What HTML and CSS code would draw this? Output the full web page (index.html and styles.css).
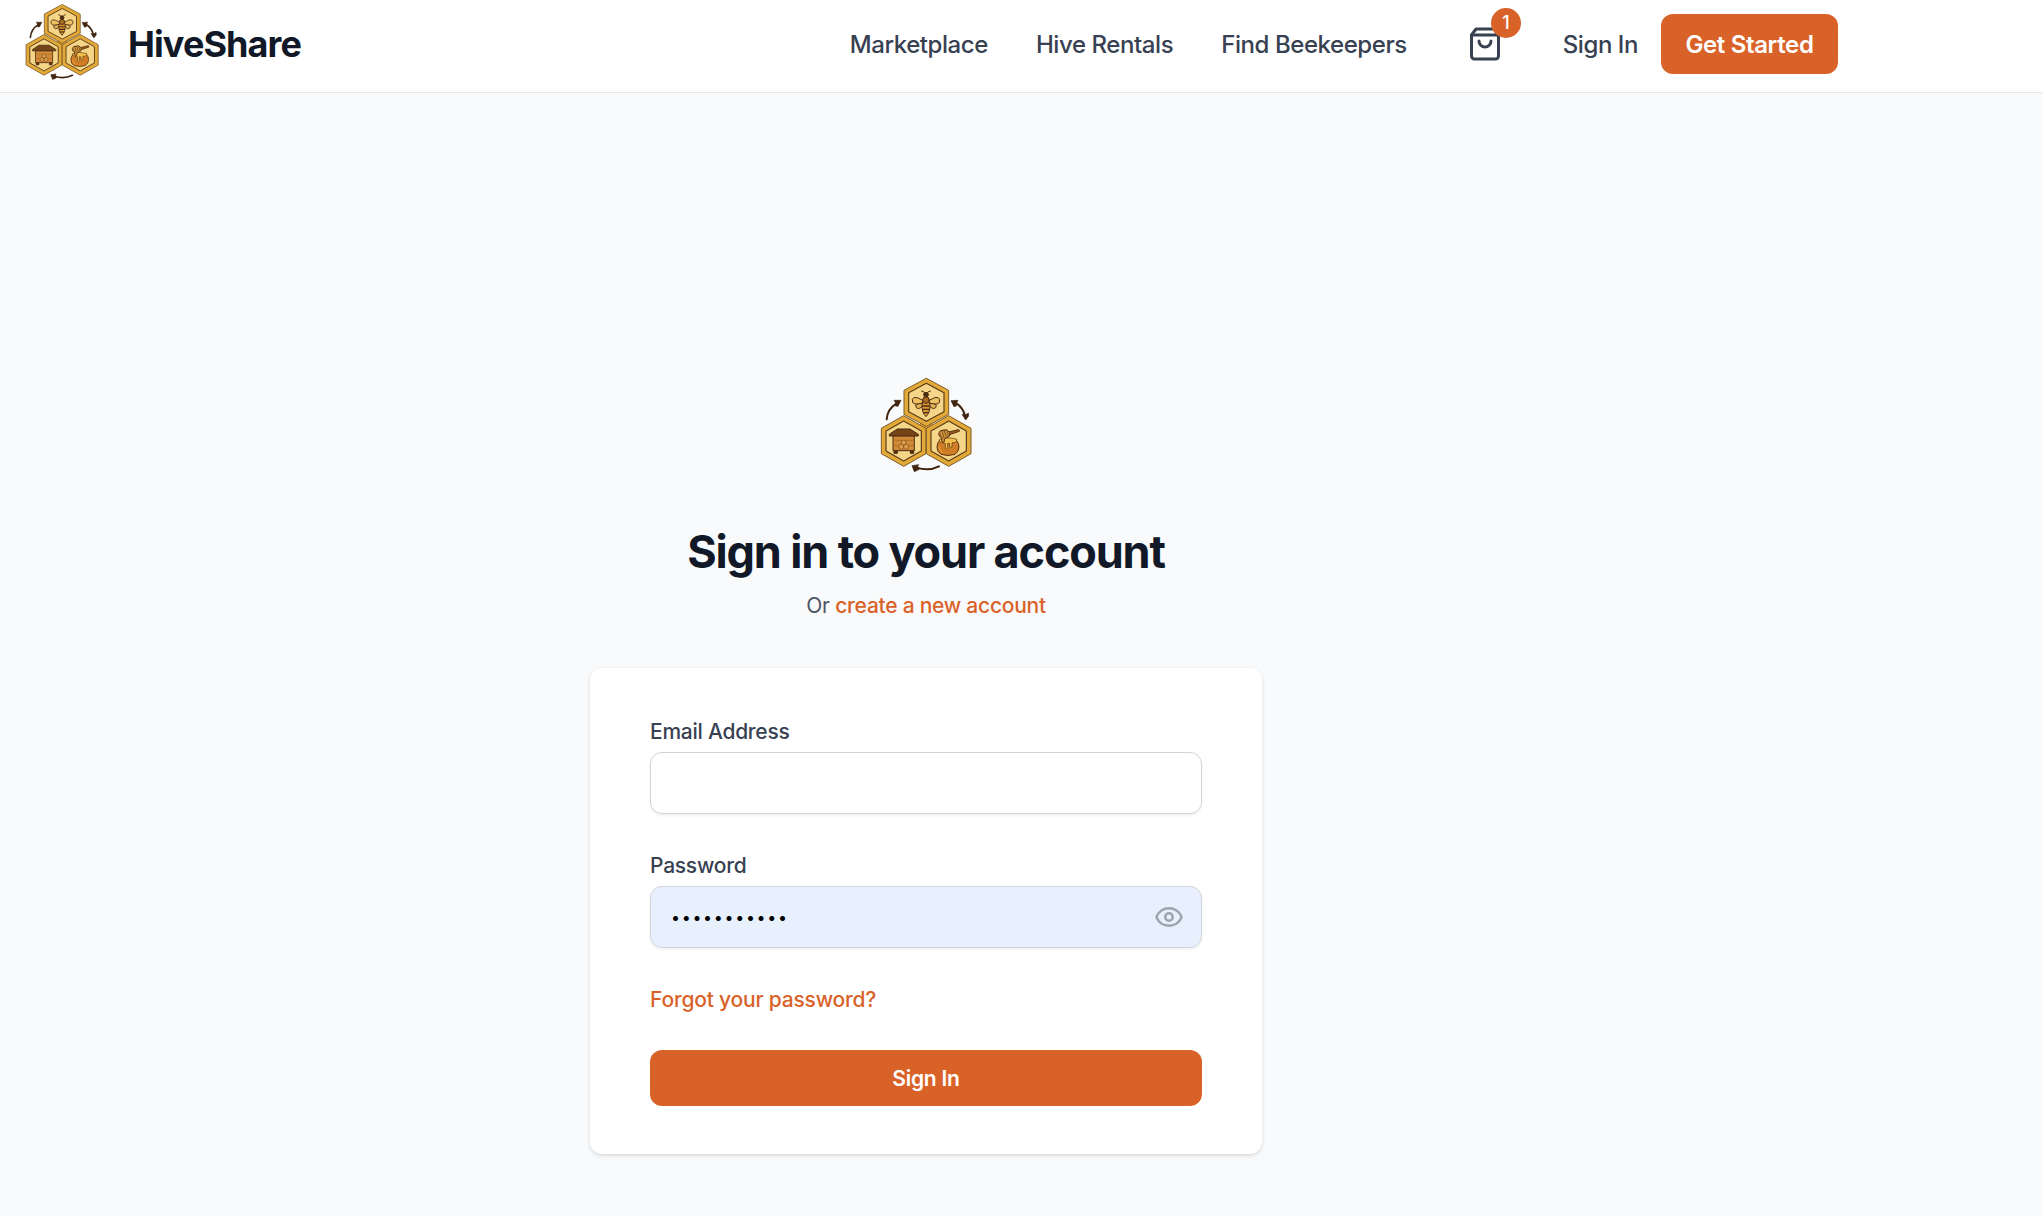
FILE: index.html
```html
<!DOCTYPE html>
<html lang="en">
<head>
    <meta charset="UTF-8">
    <meta name="viewport" content="width=device-width, initial-scale=1.0">
    <title>HiveShare - Sign In</title>
    <link rel="stylesheet" href="styles.css">
</head>
<body>
    <!-- Logo, shared by the header and the form -->
    <svg class="sprite" aria-hidden="true">
        <symbol id="logo" viewBox="60 22 276 288">
            <defs>
                <g id="cell">
                    <path d="M0-76 67-38V38L0 76-67 38V-38Z" fill="#e3a938" stroke="#7d5a28" stroke-width="3" stroke-linejoin="round"/>
                    <path d="M0-60 53-30V30L0 60-53 30V-30Z" fill="#f5d688" stroke="#5a3c17" stroke-width="3.5" stroke-linejoin="round"/>
                </g>
            </defs>
            <path d="M180 150h38v45h-38Z" fill="#e3a938"/>
            <use href="#cell" transform="translate(199 98) scale(1 .95)"/>
            <use href="#cell" x="131" y="214"/>
            <use href="#cell" x="266" y="214"/>

            <!-- bee -->
            <g stroke="#4a2c12" stroke-width="3" stroke-linecap="round" fill="none">
                <path d="M194 70q-2-6-9-6M202 70q2-6 9-6"/>
                <path d="M190 93 172 84q-13-3-15 5-2 12 8 14 12 2 25-4M206 93l18-9q13-3 15 5 2 12-8 14-12 2-25-4" fill="#edc064"/>
                <path d="M188 101q-16 0-21 6 0 9 8 10 9-1 14-11M208 101q16 0 21 6 0 9-8 10-9-1-14-11" fill="#e5b55a"/>
                <path d="M188 96q-5 14 0 28 4 11 10 17 6-6 10-17 5-14 0-28Z" fill="#d89733"/>
                <path d="M188 109h20M188 119h20M191 129h14" stroke-width="4"/>
                <ellipse cx="198" cy="91" rx="10" ry="10" fill="#a76a22"/>
                <circle cx="198" cy="75" r="7" fill="#4a2c12"/>
            </g>

            <!-- hive box -->
            <g stroke="#4a2a12" stroke-width="3" stroke-linejoin="round">
                <path d="M102 240h10v11h-10ZM151 240h10v11h-10Z" fill="#5a3214"/>
                <path d="M99 198h64v45H99Z" fill="#d18a38"/>
                <path d="M99 212h64M99 228h64" stroke="#a4642a" stroke-width="2"/>
                <path d="M88 194 112 178h38l25 16v5H88Z" fill="#754518"/>
                <path d="m131 211 7 4v8l-7 4-7-4v-8ZM124 223l7 4v8l-7 4-7-4v-8ZM138 223l7 4v8l-7 4-7-4v-8Z" fill="#dfa24b" stroke="#7a4a1c" stroke-width="2"/>
            </g>

            <!-- honey pot -->
            <g stroke="#55310f" stroke-width="3" stroke-linejoin="round" stroke-linecap="round">
                <path d="M240 211q-9 8-9 21 0 15 12 22 21 7 42 0 12-9 12-22 0-12-8-20Z" fill="#cf7d27"/>
                <path d="M239 209q25-9 51 0v7q-8 5-14 3v13q-4 5-7 0v-10l-6-1v15q-4 5-7 0v-15q-12 1-17-5Z" fill="#f2bf4c" stroke-width="2"/>
                <path d="m266 187 29-7q5 1 3 5l-27 9Z" fill="#9b5b1d"/>
                <path d="m242 183 18-3 10 9-2 11-15 8v8q-3 5-7 1l-1-12q-8-3-9-12Z" fill="#d3963c"/>
                <path d="m245 182 7 22M252 181l7 21M239 191l7 14M260 182l5 16" fill="none" stroke-width="2"/>
                <path d="M237 232q2 12 10 16" fill="none" stroke="#eda63e"/>
            </g>

            <!-- arrows between the cells -->
            <g fill="none" stroke="#40240f" stroke-width="6" stroke-linecap="round">
                <path d="M80 149q2-31 30-48M286 99q24 15 29 40M237 290q-32 16-68 3"/>
            </g>
            <path d="m123 92-21 0 5 8-1 9 8 1ZM273 93l21-1-4 7-1 10-7 2ZM317 151l-11-17 10 2 9-6 1 9ZM156 288l20-3-4 8 6 6-15 7Z" fill="#40240f" stroke="#40240f" stroke-width="2" stroke-linejoin="round"/>
        </symbol>
    </svg>

    <header>
        <div class="header-inner">
            <a class="brand" href="#">
                <svg class="brand-logo"><use href="#logo"/></svg>
                <span class="brand-name">HiveShare</span>
            </a>
            <nav>
                <a href="#">Marketplace</a>
                <a href="#">Hive Rentals</a>
                <a href="#">Find Beekeepers</a>
            </nav>
            <a class="cart" href="#" aria-label="Cart">
                <svg viewBox="0 0 24 24">
                    <path d="M6 2 3 6v14a2 2 0 0 0 2 2h14a2 2 0 0 0 2-2V6l-3-4Z"/>
                    <path d="M3 6h18"/>
                    <path d="M16 10a4 4 0 0 1-8 0"/>
                </svg>
                <span class="cart-count">1</span>
            </a>
            <a class="sign-in" href="#">Sign In</a>
            <a class="get-started" href="#">Get Started</a>
        </div>
    </header>

    <main>
        <svg class="form-logo"><use href="#logo"/></svg>
        <h1>Sign in to your account</h1>
        <p class="subtitle">Or <a href="#">create a new account</a></p>

        <form class="card">
            <label for="email">Email Address</label>
            <input type="email" id="email">

            <label for="password">Password</label>
            <div class="password-field">
                <input type="password" id="password" value="honeycombs1">
                <button type="button" class="toggle" aria-label="Show password">
                    <svg viewBox="0 0 24 24">
                        <path d="M2.062 12.348a1 1 0 0 1 0-.696 10.75 10.75 0 0 1 19.876 0 1 1 0 0 1 0 .696 10.75 10.75 0 0 1-19.876 0"/>
                        <circle cx="12" cy="12" r="3"/>
                    </svg>
                </button>
            </div>

            <a class="forgot" href="#">Forgot your password?</a>
            <button type="submit" class="submit">Sign In</button>
        </form>
    </main>
</body>
</html>
```
FILE: styles.css
```css
* {
    box-sizing: border-box;
}

body {
    font-family: Inter, "Liberation Sans", sans-serif;
    margin: 0;
    min-height: 1216px;
    background-color: #f9fafc;
    color: #111827;
}

a {
    color: inherit;
    text-decoration: none;
}

.sprite {
    position: absolute;
    width: 0;
    height: 0;
}

header {
    height: 93px;
    background-color: #fff;
    border-bottom: 1px solid #e2e5e9;
}

.header-inner {
    display: flex;
    align-items: center;
    width: 1838px;
    height: 88px;
    padding-left: 25px;
    font-size: 24px;
    font-weight: 550;
    line-height: 36px;
    letter-spacing: -0.43px;
    color: #374151;
    white-space: nowrap;
}

.brand {
    display: flex;
    align-items: center;
    gap: 29px;
    margin-right: auto;
}

.brand-logo {
    width: 74px;
    height: 78px;
    margin-top: -4px;
}

.brand-name {
    font-size: 36px;
    font-weight: 700;
    letter-spacing: -0.9px;
    color: #111827;
}

nav {
    display: flex;
    gap: 48px;
    margin-right: 60px;
    padding-top: 1px;
}

.cart {
    position: relative;
    width: 36px;
    height: 36px;
    margin-right: 60px;
}

.cart svg,
.toggle svg {
    display: block;
    width: 100%;
    height: 100%;
    fill: none;
    stroke: currentColor;
    stroke-width: 2;
    stroke-linecap: round;
    stroke-linejoin: round;
}

.cart-count {
    position: absolute;
    top: -18px;
    right: -18px;
    width: 30px;
    height: 30px;
    border-radius: 50%;
    background-color: #d96229;
    color: #fff;
    font-size: 18px;
    line-height: 30px;
    text-align: center;
}

.sign-in {
    margin-right: 23px;
    padding-top: 1px;
}

.get-started {
    width: 177px;
    height: 60px;
    border-radius: 12px;
    background-color: #d96229;
    color: #fff;
    font-weight: 600;
    line-height: 61px;
    letter-spacing: -0.35px;
    text-align: center;
}

main {
    display: flex;
    flex-direction: column;
    align-items: center;
    width: 1852px;
    padding-top: 284px;
}

.form-logo {
    width: 92px;
    height: 96px;
}

h1 {
    margin: 52px 0 0;
    font-size: 45px;
    font-weight: 700;
    line-height: 54px;
    letter-spacing: -1.15px;
}

.subtitle {
    margin: 12px 0 0;
    font-size: 21px;
    line-height: 30px;
    letter-spacing: -0.25px;
    color: #4b5563;
}

.subtitle a,
.forgot {
    color: #d96229;
    font-weight: 550;
}

.card {
    display: flex;
    flex-direction: column;
    width: 672px;
    height: 486px;
    margin-top: 47px;
    padding: 49px 60px 48px;
    border-radius: 12px;
    background-color: #fff;
    box-shadow: 0 1.5px 4.5px rgba(0, 0, 0, 0.1), 0 1.5px 3px -1.5px rgba(0, 0, 0, 0.1);
}

label {
    margin-bottom: 5px;
    font-size: 21px;
    font-weight: 550;
    line-height: 30px;
    letter-spacing: -0.25px;
    color: #374151;
}

input {
    width: 100%;
    height: 62px;
    padding: 0 20px;
    border: 1px solid #d1d5db;
    border-radius: 12px;
    box-shadow: 0 1.5px 3px rgba(0, 0, 0, 0.05);
    font-family: inherit;
    font-size: 21px;
    outline: none;
}

#email {
    margin-bottom: 37px;
}

.password-field {
    position: relative;
}

#password {
    display: block;
    background-color: #e8effd;
    color: #000;
    font-size: 16px;
    letter-spacing: 1.7px;
}

.toggle {
    position: absolute;
    top: 16px;
    right: 18px;
    width: 30px;
    height: 30px;
    padding: 0;
    border: 0;
    background: none;
    color: #9ca3af;
}

.forgot {
    margin-top: 37px;
    font-size: 21px;
    line-height: 30px;
    letter-spacing: -0.2px;
}

.submit {
    height: 56px;
    margin-top: 35px;
    border: 0;
    border-radius: 12px;
    background-color: #d96229;
    color: #fff;
    font-family: inherit;
    font-size: 21px;
    font-weight: 600;
    letter-spacing: -0.25px;
}
```
